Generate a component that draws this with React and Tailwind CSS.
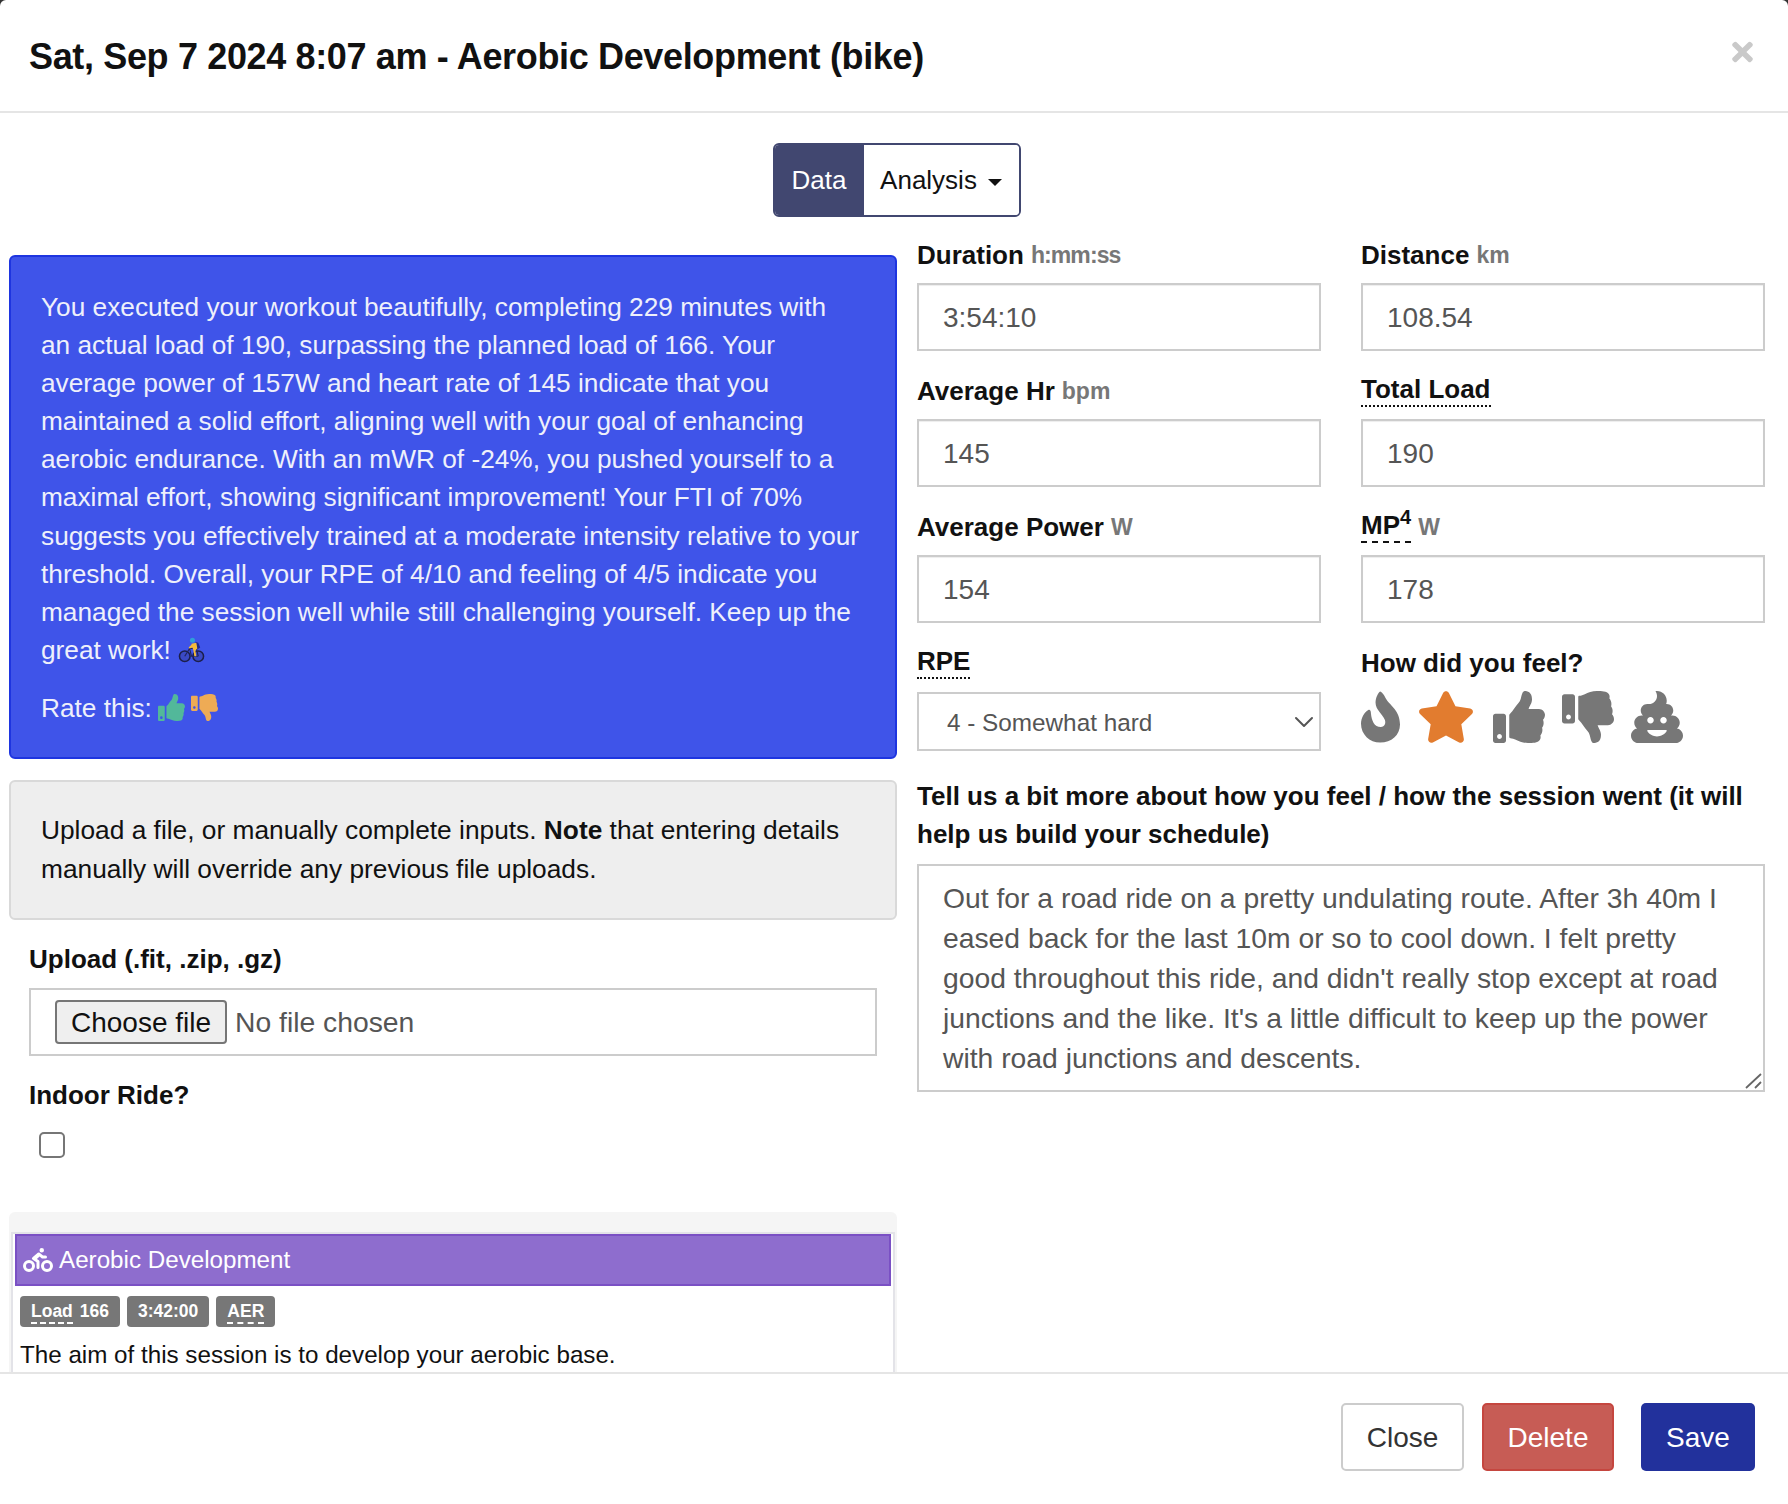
import { ChevronDown } from 'lucide-react'
import { FaBiking, FaPoo, FaStar, FaThumbsDown, FaThumbsUp, FaTimes } from 'react-icons/fa'

const summaryLines = [
  'You executed your workout beautifully, completing 229 minutes with',
  'an actual load of 190, surpassing the planned load of 166. Your',
  'average power of 157W and heart rate of 145 indicate that you',
  'maintained a solid effort, aligning well with your goal of enhancing',
  'aerobic endurance. With an mWR of -24%, you pushed yourself to a',
  'maximal effort, showing significant improvement! Your FTI of 70%',
  'suggests you effectively trained at a moderate intensity relative to your',
  'threshold. Overall, your RPE of 4/10 and feeling of 4/5 indicate you',
  'managed the session well while still challenging yourself. Keep up the',
]

const notes = `Out for a road ride on a pretty undulating route. After 3h 40m I
eased back for the last 10m or so to cool down. I felt pretty
good throughout this ride, and didn't really stop except at road
junctions and the like. It's a little difficult to keep up the power
with road junctions and descents.`

function CyclistEmoji() {
  return (
    <svg viewBox="0 0 28 28" className="inline-block h-[27px] w-[27px] align-[-4px]">
      <circle cx="7" cy="21" r="5.5" fill="#3a49c4" stroke="#1c1f4a" strokeWidth="1.6" />
      <circle cx="21" cy="21" r="5.5" fill="#3a49c4" stroke="#1c1f4a" strokeWidth="1.6" />
      <path d="M7 21l5-8h7l2 8M12 13l2 8h7" fill="none" stroke="#20245c" strokeWidth="1.2" />
      <path d="M18 6l3 1 2 5-3 2z" fill="#1e2a8c" />
      <path d="M14 8l5-1 1 6-2 2 1 6h-2l-1-6-1-3-3 1-1-1 3-3z" fill="#f4bb3a" />
      <circle cx="15" cy="4.5" r="2.6" fill="#2f9fd8" />
    </svg>
  )
}

function FlameIcon() {
  return (
    <svg viewBox="0 0 118 155" className="h-[52px] w-[39px] shrink-0" fill="currentColor">
      <path d="M58 0C66 2 72 16 78 26C88 42 118 58 118 100C118 132 92 155 58 155C26 155 0 130 0 98C0 80 10 62 22 56C28 53 30 60 30 66C32 88 40 108 60 108C72 108 76 96 72 86C64 68 44 56 44 34C44 20 52 2 58 0Z" />
    </svg>
  )
}

function Label({ text, unit, underline, unitClass = '' }) {
  return (
    <div className="flex h-[45px] items-start text-[26px] leading-[34px] font-bold text-[#111111]">
      <span className={underline === 'dotted' ? 'border-b-2 border-dotted border-[#111111] leading-[31px]' : underline === 'dashed' ? 'border-b-2 border-dashed border-[#111111] leading-[31px]' : ''}>
        {text}
      </span>
      {unit ? <span className={`ml-[7px] text-[23px] text-[#777777] ${unitClass}`}>{unit}</span> : null}
    </div>
  )
}

function Field({ label, unit, value, underline, unitClass }) {
  return (
    <div>
      <Label text={label} unit={unit} underline={underline} unitClass={unitClass} />
      <input
        readOnly
        value={value}
        className="block h-[68px] w-full border-2 border-[#cccccc] bg-white px-[24px] pt-[2px] font-['Liberation_Sans',sans-serif] text-[28px] text-[#555555] shadow-[inset_0_1px_1px_rgba(0,0,0,0.075)] outline-none"
      />
    </div>
  )
}

function Badge({ children }) {
  return (
    <span className="flex h-[31px] items-center rounded-[4px] bg-[#777777] px-[11px] text-[17.5px] font-bold text-white">
      {children}
    </span>
  )
}

function App() {
  return (
    <div className="h-screen w-full bg-[#333333] font-['Liberation_Sans',sans-serif] text-[#111111]">
      <div className="flex h-full flex-col overflow-hidden rounded-t-[6px] bg-white">
        <header className="flex h-[113px] shrink-0 items-start justify-between border-b-2 border-[#e5e5e5] pl-[29px] pr-[35px]">
          <h4 className="mt-[34px] text-[36px] leading-[46px] font-bold tracking-[-0.35px] text-[#111111]">
            Sat, Sep 7 2024 8:07 am - Aerobic Development (bike)
          </h4>
          <FaTimes className="mt-[37px] h-[30px] w-[21px] text-[#c9c9c9]" />
        </header>

        <div className="min-h-0 flex-1 overflow-hidden">
          <div className="mt-[30px] flex justify-center pl-[5px]">
            <div className="flex h-[74px] w-[248px] overflow-hidden rounded-[6px] border-2 border-[#414770] text-[26px]">
              <span className="flex w-[89px] items-center justify-center bg-[#414770] text-white">Data</span>
              <span className="flex flex-1 items-center justify-center gap-[11px] bg-white text-[#111111]">
                Analysis
                <span className="mt-[4px] h-0 w-0 border-x-[7px] border-t-[7px] border-x-transparent border-t-[#111111]" />
              </span>
            </div>
          </div>

          <div className="mt-[21px] flex items-start pl-[9px]">
            <div className="mt-[17px] w-[888px] shrink-0">
              <div className="rounded-[6px] border-2 border-[#1e35e0] bg-[#3f54e9] px-[30px] pt-[31px] pb-[30px] text-[26.25px] leading-[38.1px] text-[#eef0fb]">
                <p className="whitespace-nowrap">
                  {summaryLines.map((line) => (
                    <span key={line} className="block">{line}</span>
                  ))}
                  <span className="block">great work! <CyclistEmoji /></span>
                </p>
                <div className="mt-[20px] flex items-center gap-[6px]">
                  Rate this:
                  <FaThumbsUp className="h-[27px] w-[27px] text-[#52b89a]" />
                  <FaThumbsDown className="h-[27px] w-[27px] text-[#eeab55]" />
                </div>
              </div>

              <div className="mt-[21px] h-[140px] rounded-[6px] border-2 border-[#d9d9d9] bg-[#eeeeee] px-[30px] pt-[29px] text-[26.3px] leading-[38.6px] text-[#111111]">
                Upload a file, or manually complete inputs. <b>Note</b> that entering details manually will override any previous file uploads.
              </div>

              <div className="px-[20px]">
                <div className="mt-[22px] h-[46px] text-[26px] leading-[34px] font-bold">Upload (.fit, .zip, .gz)</div>
                <div className="flex h-[68px] items-center border-2 border-[#cccccc] pl-[24px]">
                  <span className="flex h-[44px] w-[172px] items-center justify-center rounded-[4px] border-2 border-[#767676] bg-[#efefef] pt-[1px] text-[28px] text-[#111111]">
                    Choose file
                  </span>
                  <span className="ml-[8px] pt-[1px] text-[28.3px] text-[#555555]">No file chosen</span>
                </div>
                <div className="mt-[22px] h-[54px] text-[26px] leading-[34px] font-bold">Indoor Ride?</div>
                <div className="ml-[10px] h-[26px] w-[26px] rounded-[5px] border-2 border-[#767676] bg-white" />
              </div>

              <div className="mt-[54px] rounded-t-[6px] bg-[#f5f5f5] pt-[20px]">
                <div className="mx-[2px] h-[200px] border-2 border-b-0 border-[#e3e3e8] bg-white px-[2px]">
                  <div className="flex h-[52px] items-center gap-[6px] border-2 border-[#7a50c4] bg-[#8e6dce] pl-[6px] text-[24.2px] text-white">
                    <FaBiking className="h-[30px] w-[30px]" />
                    Aerobic Development
                  </div>
                  <div className="mt-[10px] flex gap-[7px] pl-[5px]">
                    <Badge>
                      <span className="border-b-2 border-dashed border-white leading-[22px]">Load</span>
                      <span className="ml-[7px]">166</span>
                    </Badge>
                    <Badge>3:42:00</Badge>
                    <Badge>
                      <span className="border-b-2 border-dashed border-white leading-[22px]">AER</span>
                    </Badge>
                  </div>
                  <p className="mt-[11px] pl-[5px] text-[24.2px] leading-[34px] text-[#111111]">The aim of this session is to develop your aerobic base.</p>
                </div>
              </div>
            </div>

            <div className="ml-[20px] w-[848px] shrink-0">
              <div className="grid grid-cols-2 gap-x-[40px] gap-y-[23px]">
                <Field label="Duration" unit="h:mm:ss" value="3:54:10" unitClass="tracking-[-0.9px]" />
                <Field label="Distance" unit="km" value="108.54" />
                <Field label="Average Hr" unit="bpm" value="145" />
                <Field label="Total Load" value="190" underline="dotted" />
                <Field label="Average Power" unit="W" value="154" />
                <Field
                  label={<>MP<sup className="text-[20px] leading-none">4</sup></>}
                  unit="W"
                  value="178"
                  underline="dashed"
                />
                <div>
                  <Label text="RPE" underline="dotted" />
                  <div className="relative mt-[1px]">
                    <select className="h-[59px] w-full appearance-none border-2 border-[#cccccc] bg-white pt-[4px] pl-[28px] font-['Liberation_Sans',sans-serif] text-[24.3px] text-[#555555] outline-none">
                      <option>4 - Somewhat hard</option>
                    </select>
                    <ChevronDown className="pointer-events-none absolute top-[14px] right-[1px] h-[32px] w-[32px] text-[#555555]" strokeWidth={1.5} />
                  </div>
                </div>
                <div>
                  <Label text="How did you feel?" />
                  <div className="flex items-start text-[#777777]">
                    <FlameIcon />
                    <FaStar className="ml-[17px] h-[52px] w-[58px] text-[#e27c2f]" />
                    <FaThumbsUp className="ml-[18px] h-[52px] w-[52px]" />
                    <FaThumbsDown className="ml-[17px] h-[52px] w-[52px]" />
                    <FaPoo className="ml-[17px] h-[52px] w-[52px]" />
                  </div>
                </div>
              </div>

              <div className="mt-[26px] text-[26px] leading-[38px] font-bold text-[#111111]">
                Tell us a bit more about how you feel / how the session went (it will help us build your schedule)
              </div>
              <div className="relative mt-[11px]">
                <textarea
                  readOnly
                  value={notes}
                  className="block h-[228px] w-full resize-none overflow-hidden border-2 border-[#cccccc] bg-white px-[24px] pt-[12px] font-['Liberation_Sans',sans-serif] text-[28.3px] leading-[40px] whitespace-pre text-[#555555] outline-none"
                />
                <svg viewBox="0 0 18 18" className="pointer-events-none absolute right-[3px] bottom-[3px] h-[18px] w-[18px]" stroke="#666666" strokeWidth="1.8" fill="none">
                  <path d="M2 17L17 3M11 17L17 11" />
                </svg>
              </div>
            </div>
          </div>
        </div>

        <footer className="flex h-[132px] shrink-0 items-start justify-end border-t-2 border-[#e5e5e5] pt-[29px] pr-[33px] text-[28px]">
          <button className="h-[68px] w-[123px] rounded-[5px] border-2 border-[#cccccc] bg-white pt-[2px] text-[#333333]">Close</button>
          <button className="ml-[18px] h-[68px] w-[132px] rounded-[5px] border-2 border-[#c5463f] bg-[#c75c55] pt-[2px] text-white">Delete</button>
          <button className="ml-[27px] h-[68px] w-[114px] rounded-[5px] bg-[#22319c] pt-[2px] text-white">Save</button>
        </footer>
      </div>
    </div>
  )
}

export default App
